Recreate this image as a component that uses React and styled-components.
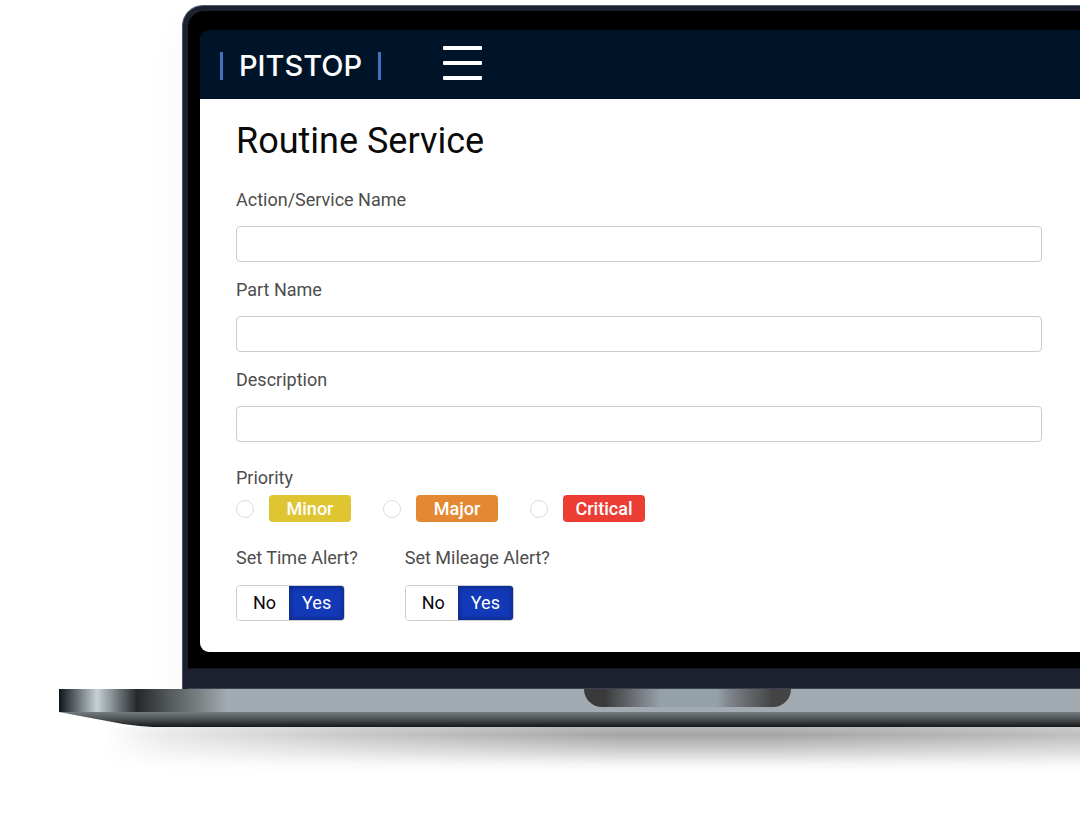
import React, { useState } from "react";
import styled, { createGlobalStyle } from "styled-components";

const PRIORITIES = [
  { name: "Minor", color: "#dec531" },
  { name: "Major", color: "#e38933" },
  { name: "Critical", color: "#ec3d35" },
];

const FIELDS = [
  { id: "serviceName", label: "Action/Service Name" },
  { id: "partName", label: "Part Name" },
  { id: "description", label: "Description" },
];

const AlertToggle = ({ label }) => {
  const [isOn, setIsOn] = useState(true);

  return (
    <AlertGroup>
      <Legend>{label}</Legend>
      <ToggleBox>
        <ToggleButton
          type="button"
          $active={!isOn}
          aria-pressed={!isOn}
          onClick={() => setIsOn(false)}
        >
          No
        </ToggleButton>
        <ToggleButton
          type="button"
          $active={isOn}
          aria-pressed={isOn}
          onClick={() => setIsOn(true)}
        >
          Yes
        </ToggleButton>
      </ToggleBox>
    </AlertGroup>
  );
};

const ServiceForm = () => {
  const [priority, setPriority] = useState("");

  return (
    <Form>
      <Title>Routine Service</Title>
      <FieldList>
        {FIELDS.map(({ id, label }) => (
          <Field key={id}>
            <Label htmlFor={id}>{label}</Label>
            <TextInput id={id} type="text" />
          </Field>
        ))}
      </FieldList>
      <PriorityGroup>
        <Legend>Priority</Legend>
        <PriorityRow>
          {PRIORITIES.map(({ name, color }) => (
            <PriorityOption key={name}>
              <Radio
                type="radio"
                name="priority"
                checked={priority === name}
                onChange={() => setPriority(name)}
              />
              <Badge $color={color}>{name}</Badge>
            </PriorityOption>
          ))}
        </PriorityRow>
      </PriorityGroup>
      <AlertRow>
        <AlertToggle label="Set Time Alert?" />
        <AlertToggle label="Set Mileage Alert?" />
      </AlertRow>
    </Form>
  );
};

const App = () => {
  return (
    <Stage>
      <GlobalStyle />
      <Lid>
        <Bezel>
          <Screen>
            <Header>
              <Logo href="#">PITSTOP</Logo>
              <MenuButton type="button" aria-label="Menu">
                <MenuBar />
                <MenuBar />
                <MenuBar />
              </MenuButton>
            </Header>
            <ServiceForm />
          </Screen>
        </Bezel>
        <Hinge />
      </Lid>
      <Deck>
        <Notch />
      </Deck>
      <Underside />
      <Shadow />
    </Stage>
  );
};

const GlobalStyle = createGlobalStyle`
  * {
    box-sizing: border-box;
  }

  body {
    margin: 0;
    background-color: #fff;
    font-family: Roboto, "Liberation Sans", sans-serif;
    font-size: 18px;
  }

  button,
  input {
    font: inherit;
  }
`;

const Stage = styled.div`
  padding: 5px 0 0 59px;
  overflow: hidden;
`;

const Lid = styled.div`
  margin-left: 123px;
  padding: 5px 0 0 5px;
  border-top: 1px solid #536075;
  border-left: 1px solid #46536a;
  border-top-left-radius: 21px;
  background-color: #1b212e;
  box-shadow: 0 20px 40px rgba(0, 0, 0, 0.04);
`;

const Bezel = styled.div`
  padding: 19px 0 16px 12px;
  border-top-left-radius: 16px;
  background-color: #000;
`;

const Screen = styled.div`
  border-radius: 9px 0 0 9px;
  overflow: hidden;
`;

const Header = styled.header`
  display: flex;
  align-items: flex-end;
  gap: 62px;
  padding: 16px 20px 19px;
  background-color: #001429;
`;

const Logo = styled.a`
  padding: 0 16px;
  border: solid #4470bd;
  border-width: 0 3px;
  font-family: Inter, sans-serif;
  font-weight: 500;
  font-size: 29px;
  line-height: 28px;
  color: #fff;
  text-decoration: none;
`;

const MenuButton = styled.button`
  display: flex;
  flex-direction: column;
  gap: 11px;
  width: 39px;
  padding: 0;
  border: 0;
  background: none;
  cursor: pointer;
`;

const MenuBar = styled.span`
  width: 100%;
  height: 4px;
  border-radius: 1px;
  background-color: #fff;
`;

const Form = styled.form`
  padding: 21px 38px 31px 36px;
  background-color: #fff;
`;

const Title = styled.h1`
  margin: 0 0 26px;
  font-weight: 400;
  font-size: 36px;
  line-height: 42px;
  color: #0a0a0a;
`;

const FieldList = styled.div`
  display: flex;
  flex-direction: column;
  gap: 16px;
`;

const Field = styled.div`
  display: flex;
  flex-direction: column;
  gap: 14px;
`;

const Label = styled.label`
  line-height: 24px;
  color: #4d4d4d;
`;

const TextInput = styled.input`
  width: 100%;
  height: 36px;
  padding: 0 12px;
  border: 1px solid #ccc;
  border-radius: 4px;
  background-color: #fff;
`;

const PriorityGroup = styled.fieldset`
  margin: 24px 0;
  padding: 0;
  border: 0;
`;

const Legend = styled.legend`
  padding: 0;
  line-height: 24px;
  color: #4d4d4d;
`;

const PriorityRow = styled.div`
  display: flex;
  flex-wrap: wrap;
  gap: 32px;
  padding-top: 5px;
`;

const PriorityOption = styled.label`
  display: flex;
  align-items: center;
  gap: 15px;
  cursor: pointer;
`;

const Radio = styled.input`
  appearance: none;
  width: 18px;
  height: 18px;
  margin: 0;
  border: 1px solid #ddd;
  border-radius: 50%;
  background-color: #fff;

  &:checked {
    border: 5px solid #1239b8;
  }
`;

const Badge = styled.span`
  width: 82px;
  border-radius: 4px;
  background-color: ${({ $color }) => $color};
  font-weight: 500;
  line-height: 27px;
  color: #fff;
  text-align: center;
`;

const AlertRow = styled.div`
  display: flex;
  flex-wrap: wrap;
  gap: 47px;
`;

const AlertGroup = styled.fieldset`
  min-width: 0;
  margin: 0;
  padding: 0;
  border: 0;
`;

const ToggleBox = styled.div`
  display: inline-flex;
  height: 36px;
  margin-top: 15px;
  border: 1px solid #ccc;
  border-radius: 4px;
  overflow: hidden;
  vertical-align: top;
`;

const ToggleButton = styled.button`
  padding: 0 13px 2px;
  border: 0;
  background-color: ${({ $active }) => ($active ? "#1239b8" : "#fff")};
  box-shadow: ${({ $active }) =>
    $active ? "inset 0 0 6px rgba(0, 0, 0, 0.4)" : "none"};
  color: ${({ $active }) => ($active ? "#fff" : "#0a0a0a")};
  cursor: pointer;

  &:first-child {
    padding-left: 16px;
  }
`;

const Hinge = styled.div`
  height: 21px;
  border-top: 1px solid #11151d;
  border-bottom: 1px solid #3a4250;
`;

const Deck = styled.div`
  height: 23px;
  background: linear-gradient(
    to right,
    #0c1418 0,
    #2c3438 6px,
    #c6d1d7 38px,
    #24282a 78px,
    #565b5d 112px,
    #7b8083 140px,
    #a3abb2 168px
  );
`;

const Notch = styled.div`
  width: 207px;
  height: 18px;
  margin-left: 525px;
  border-radius: 0 0 18px 18px;
  background: linear-gradient(
    to right,
    #3a3a3a 10%,
    #7c8288 29%,
    #95a1a8 37%,
    #95a1a8 64%,
    #7c8288 71%,
    #444 91%
  );
`;

const Underside = styled.div`
  height: 15px;
  background: linear-gradient(to bottom, #757c80, #45494c 55%, #15171a);
  clip-path: polygon(
    0 0,
    100% 0,
    100% 100%,
    94px 100%,
    80px 14px,
    64px 12px,
    48px 9px,
    21px 4px
  );
`;

const Shadow = styled.div`
  height: 45px;
  background: linear-gradient(
    to right,
    transparent 45px,
    rgba(0, 0, 0, 0.09) 110px,
    rgba(0, 0, 0, 0.22) 300px,
    rgba(0, 0, 0, 0.35) 560px,
    rgba(0, 0, 0, 0.35) 720px,
    rgba(0, 0, 0, 0.25) 1020px
  );
  mask-image: linear-gradient(
    to bottom,
    rgba(0, 0, 0, 0.8),
    #000 18%,
    rgba(0, 0, 0, 0.5) 55%,
    rgba(0, 0, 0, 0.12) 82%,
    transparent
  );
`;

export default App;
